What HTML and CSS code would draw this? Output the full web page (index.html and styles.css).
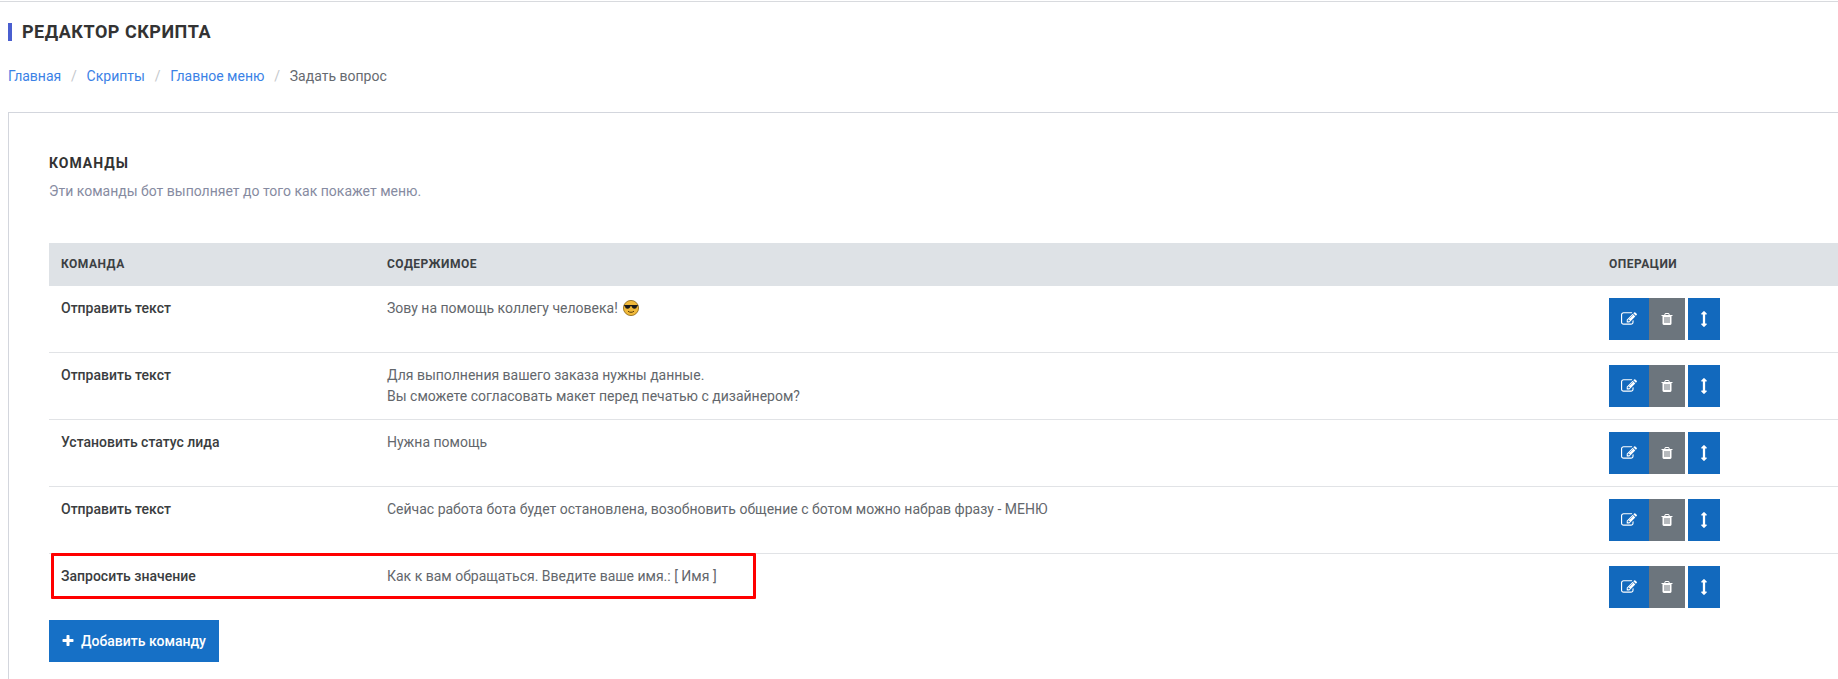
FILE: index.html
```html
<!DOCTYPE html>
<html lang="ru">
<head>
<meta charset="utf-8">
<title>Редактор скрипта</title>
<link rel="stylesheet" href="styles.css">
</head>
<body>
<svg class="defs" width="0" height="0" aria-hidden="true">
  <symbol id="i-edit" viewBox="0 0 1792 1792"><path d="M888 1184l116-116-152-152-116 116v56h96v96h56zm440-720q-16-16-33 1l-350 350q-17 17-1 33t33-1l350-350q17-17 1-33zm80 594v190q0 119-84.500 203.500t-203.500 84.500h-832q-119 0-203.500-84.500t-84.500-203.500v-832q0-119 84.500-203.500t203.500-84.500h832q63 0 117 25 15 7 18 23 3 17-9 29l-49 49q-14 14-32 8-23-6-45-6h-832q-66 0-113 47t-47 113v832q0 66 47 113t113 47h832q66 0 113-47t47-113v-126q0-13 9-22l64-64q15-15 35-7t20 29zm-96-738l288 288-672 672h-288v-288zm444 132l-92 92-288-288 92-92q28-28 68-28t68 28l152 152q28 28 28 68t-28 68z"/></symbol>
  <symbol id="i-trash" viewBox="0 0 1792 1792"><path d="M704 1376v-704q0-14-9-23t-23-9h-64q-14 0-23 9t-9 23v704q0 14 9 23t23 9h64q14 0 23-9t9-23zm256 0v-704q0-14-9-23t-23-9h-64q-14 0-23 9t-9 23v704q0 14 9 23t23 9h64q14 0 23-9t9-23zm256 0v-704q0-14-9-23t-23-9h-64q-14 0-23 9t-9 23v704q0 14 9 23t23 9h64q14 0 23-9t9-23zm-544-992h448l-48-117q-7-9-17-11h-317q-10 2-17 11zm928 32v64q0 14-9 23t-23 9h-96v948q0 83-47 143.500t-113 60.500h-832q-66 0-113-58.500t-47-141.500v-952h-96q-14 0-23-9t-9-23v-64q0-14 9-23t23-9h309l70-167q15-37 54-63t79-26h320q40 0 79 26t54 63l70 167h309q14 0 23 9t9 23z"/></symbol>
  <symbol id="i-move" viewBox="0 0 1792 1792"><path d="M1216 320q0 26-19 45t-45 19h-128v1024h128q26 0 45 19t19 45-19 45l-256 256q-19 19-45 19t-45-19l-256-256q-19-19-19-45t19-45 45-19h128v-1024h-128q-26 0-45-19t-19-45 19-45l256-256q19-19 45-19t45 19l256 256q19 19 19 45z"/></symbol>
  <symbol id="i-plus" viewBox="0 0 1792 1792"><path d="M1600 736v192q0 40-28 68t-68 28h-416v416q0 40-28 68t-68 28h-192q-40 0-68-28t-28-68v-416h-416q-40 0-68-28t-28-68v-192q0-40 28-68t68-28h416v-416q0-40 28-68t68-28h192q40 0 68 28t28 68v416h416q40 0 68 28t28 68z"/></symbol>
</svg>

<header class="page-head">
  <h1 class="page-title">РЕДАКТОР СКРИПТА</h1>
  <nav class="crumbs">
    <a href="#">Главная</a><span class="sep">/</span>
    <a href="#">Скрипты</a><span class="sep">/</span>
    <a href="#">Главное меню</a><span class="sep">/</span>
    <span class="current">Задать вопрос</span>
  </nav>
</header>

<main class="card">
  <h2 class="card-title">КОМАНДЫ</h2>
  <p class="card-sub">Эти команды бот выполняет до того как покажет меню.</p>

  <div class="table-wrap">
    <table class="commands">
      <colgroup>
        <col class="col-name"><col class="col-body"><col class="col-ops">
      </colgroup>
      <thead>
        <tr><th>КОМАНДА</th><th>СОДЕРЖИМОЕ</th><th>ОПЕРАЦИИ</th></tr>
      </thead>
      <tbody>
        <tr>
          <td class="name">Отправить текст</td>
          <td>Зову на помощь коллегу человека!
            <svg class="emoji" viewBox="0 0 16 16" aria-hidden="true">
              <circle cx="8" cy="8" r="7.6" fill="#f0b93a" stroke="#8a6414" stroke-width=".8"/>
              <path d="M1.200 5h13.600v1.200h-.8c-.2 1.700-1.100 2.500-2.600 2.500S8.900 7.700 8.700 6.300h-1.400C7.100 7.700 6.300 8.700 4.600 8.700S2.200 7.900 2 6.200h-.8z" fill="#1b1b1b"/>
              <path d="M5 11.200c1.700 1.500 4.300 1.500 6 0" fill="none" stroke="#5b3d08" stroke-width="1"/>
            </svg>
          </td>
          <td>
            <div class="ops">
              <div class="group">
                <a class="btn btn-edit" href="#"><svg class="ico-edit"><use href="#i-edit"/></svg></a>
                <a class="btn btn-del" href="#"><svg class="ico"><use href="#i-trash"/></svg></a>
              </div>
              <a class="btn btn-move" href="#"><svg class="ico-move"><use href="#i-move"/></svg></a>
            </div>
          </td>
        </tr>
        <tr>
          <td class="name">Отправить текст</td>
          <td>Для выполнения вашего заказа нужны данные.<br>Вы сможете согласовать макет перед печатью с дизайнером?</td>
          <td>
            <div class="ops">
              <div class="group">
                <a class="btn btn-edit" href="#"><svg class="ico-edit"><use href="#i-edit"/></svg></a>
                <a class="btn btn-del" href="#"><svg class="ico"><use href="#i-trash"/></svg></a>
              </div>
              <a class="btn btn-move" href="#"><svg class="ico-move"><use href="#i-move"/></svg></a>
            </div>
          </td>
        </tr>
        <tr>
          <td class="name">Установить статус лида</td>
          <td>Нужна помощь</td>
          <td>
            <div class="ops">
              <div class="group">
                <a class="btn btn-edit" href="#"><svg class="ico-edit"><use href="#i-edit"/></svg></a>
                <a class="btn btn-del" href="#"><svg class="ico"><use href="#i-trash"/></svg></a>
              </div>
              <a class="btn btn-move" href="#"><svg class="ico-move"><use href="#i-move"/></svg></a>
            </div>
          </td>
        </tr>
        <tr>
          <td class="name">Отправить текст</td>
          <td>Сейчас работа бота будет остановлена, возобновить общение с ботом можно набрав фразу - МЕНЮ</td>
          <td>
            <div class="ops">
              <div class="group">
                <a class="btn btn-edit" href="#"><svg class="ico-edit"><use href="#i-edit"/></svg></a>
                <a class="btn btn-del" href="#"><svg class="ico"><use href="#i-trash"/></svg></a>
              </div>
              <a class="btn btn-move" href="#"><svg class="ico-move"><use href="#i-move"/></svg></a>
            </div>
          </td>
        </tr>
        <tr>
          <td class="name">Запросить значение</td>
          <td>Как к вам обращаться. Введите ваше имя.: [ Имя ]</td>
          <td>
            <div class="ops">
              <div class="group">
                <a class="btn btn-edit" href="#"><svg class="ico-edit"><use href="#i-edit"/></svg></a>
                <a class="btn btn-del" href="#"><svg class="ico"><use href="#i-trash"/></svg></a>
              </div>
              <a class="btn btn-move" href="#"><svg class="ico-move"><use href="#i-move"/></svg></a>
            </div>
          </td>
        </tr>
      </tbody>
    </table>
    <div class="highlight"></div>
  </div>

  <a class="btn-add" href="#"><svg class="ico-plus"><use href="#i-plus"/></svg>Добавить команду</a>
</main>
</body>
</html>
```

FILE: styles.css
```css
* { box-sizing: border-box; }
html, body { height: 100%; }
body {
  margin: 0;
  padding-top: 1px;
  overflow: hidden;
  background: #fff;
  color: #63676c;
  font-family: Roboto, "Noto Sans", sans-serif;
  font-size: 14px;
  line-height: 21px;
}
body::before {
  content: "";
  display: block;
  height: 1px;
  background: #d8dade;
}
.defs { position: absolute; }

.page-head { padding: 21px 0 0 8px; }
.page-title {
  margin: 0;
  height: 18px;
  padding-left: 10px;
  border-left: 4px solid #4a5fd0;
  color: #333;
  font-size: 18px;
  line-height: 18px;
  font-weight: 700;
  letter-spacing: .5px;
}
.crumbs { display: flex; margin-top: 25px; height: 21px; }
.crumbs a { color: #3b82e6; text-decoration: none; }
.sep { color: #c4c8cc; padding: 0 9.800px; }
.current { color: #666a70; }

.card {
  margin: 25px 0 0 8px;
  height: 800px;
  padding: 41px 0 0 40px;
  border-left: 1px solid #d3d6dd;
  border-top: 1px solid #d3d6dd;
}
.card-title {
  margin: 0;
  color: #333;
  font-size: 14px;
  line-height: 18px;
  font-weight: 700;
  letter-spacing: 1px;
}
.card-sub { margin: 9px 0 0; color: #868ba1; line-height: 20px; }

.table-wrap { position: relative; margin-top: 42px; }
.commands { width: 100%; table-layout: fixed; border-collapse: collapse; }
.col-name { width: 326px; }
.col-ops { width: 241px; }
.commands th {
  height: 43px;
  padding: 0 12px;
  background: #dee2e6;
  color: #3c4043;
  text-align: left;
  font-size: 12px;
  font-weight: 700;
  letter-spacing: .5px;
}
.commands td {
  padding: 12px;
  vertical-align: top;
  border-top: 1px solid #e1e3e6;
}
.commands tbody tr:first-child td { border-top: 0; }
.commands td.name { color: #3a3d40; font-weight: 500; }

.emoji { width: 16px; height: 16px; vertical-align: -3px; margin-left: 2px; }

.ops { display: flex; gap: 3px; }
.group { display: flex; }
.btn { display: flex; align-items: center; justify-content: center; height: 42px; fill: #fff; }
.btn-edit { width: 40px; background: #1269bd; }
.btn-del { width: 36px; background: #6c757d; }
.btn-move { width: 32px; background: #1269bd; }
.ico { width: 14px; height: 14px; }
.ico-edit { width: 16px; height: 16px; }
.ico-move { width: 16px; height: 16px; }

.highlight {
  position: absolute;
  left: 2px;
  top: 310px;
  width: 705px;
  height: 46px;
  border: 3px solid #f00;
  border-radius: 1px;
  pointer-events: none;
}

.btn-add {
  display: inline-flex;
  align-items: center;
  height: 42px;
  margin-top: 0;
  padding: 0 13px 0 12px;
  background: #1670c6;
  color: #fff;
  fill: #fff;
  font-weight: 500;
  text-decoration: none;
}
.ico-plus { width: 14px; height: 14px; margin-right: 6px; }
```
